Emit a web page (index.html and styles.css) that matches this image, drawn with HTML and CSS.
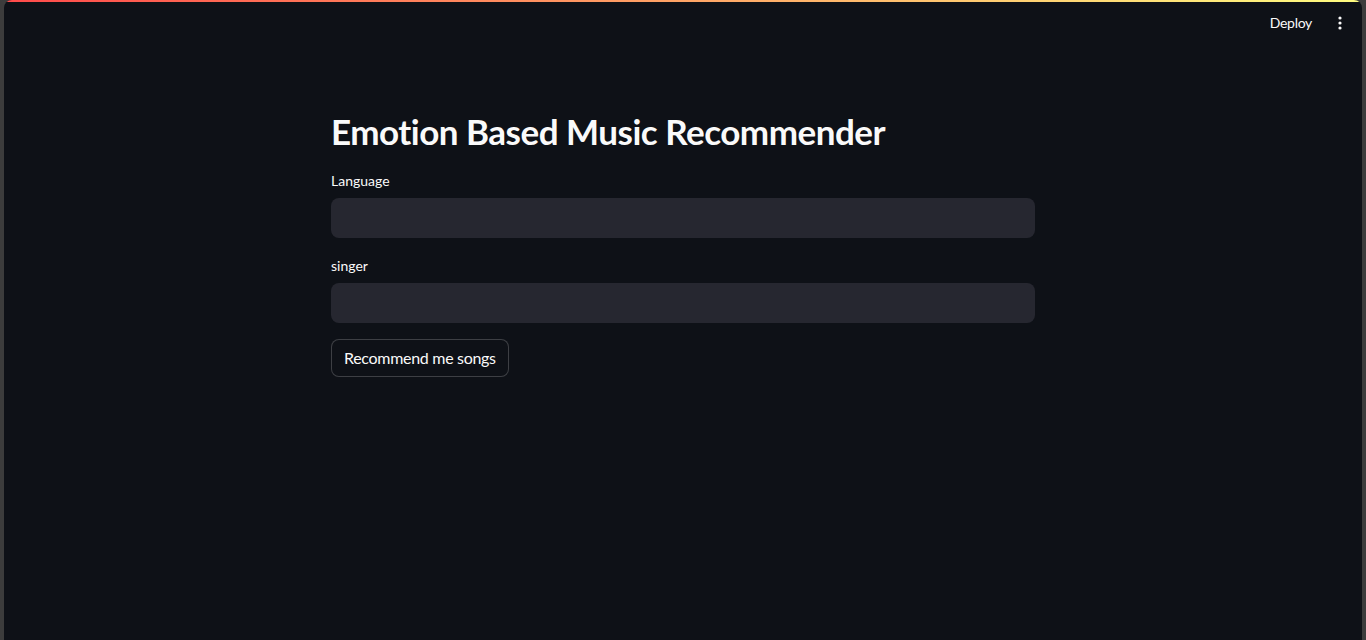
FILE: index.html
```html
<!DOCTYPE html>
<html lang="en">
<head>
<meta charset="utf-8">
<title>Emotion Based Music Recommender</title>
<link rel="stylesheet" href="styles.css">
</head>
<body>
<div class="frame">
  <div class="app">
    <div class="decoration"></div>
    <header class="header">
      <span class="deploy">Deploy</span>
      <span class="menu" aria-label="Main menu">
        <svg width="4" height="14" viewBox="0 0 4 14"><circle cx="2" cy="2" r="1.6" fill="#fafafa"/><circle cx="2" cy="7" r="1.6" fill="#fafafa"/><circle cx="2" cy="12" r="1.6" fill="#fafafa"/></svg>
      </span>
    </header>
    <main class="main">
      <div class="block">
        <h1 class="title">Emotion Based Music Recommender</h1>
        <div class="field">
          <label class="label">Language</label>
          <div class="input"></div>
        </div>
        <div class="field">
          <label class="label">singer</label>
          <div class="input"></div>
        </div>
        <div class="actions">
          <button class="button">Recommend me songs</button>
        </div>
      </div>
    </main>
  </div>
</div>
</body>
</html>
```
FILE: styles.css
```css
html, body {
  margin: 0;
  padding: 0;
  height: 100%;
}
body {
  background: #3c3c3c;
  font-family: "Lato", "Liberation Sans", sans-serif;
  font-variant-ligatures: none;
  color: #fafafa;
}
.frame {
  height: 640px;
  padding: 0 4px;
  box-sizing: border-box;
}
.app {
  position: relative;
  height: 100%;
  background: #0e1117;
  border-radius: 8px 8px 0 0;
  overflow: hidden;
  display: flex;
  flex-direction: column;
}
.decoration {
  position: absolute;
  top: 0;
  left: 0;
  right: 0;
  height: 2px;
  background: linear-gradient(90deg, rgb(255, 75, 75), rgb(255, 253, 128));
}
.header {
  height: 46px;
  display: flex;
  align-items: center;
  justify-content: flex-end;
  padding-right: 20px;
  gap: 26px;
}
.deploy {
  font-size: 14px;
  line-height: 20px;
  letter-spacing: -0.3px;
}
.menu {
  display: flex;
  align-items: center;
  width: 4px;
  height: 14px;
}
.menu svg {
  display: block;
}
.main {
  display: flex;
  justify-content: center;
  padding-top: 63px;
}
.block {
  width: 704px;
  display: flex;
  flex-direction: column;
  gap: 16px;
}
.title {
  margin: 0;
  font-size: 35px;
  font-weight: 700;
  line-height: 44px;
  letter-spacing: -0.5px;
}
.field {
  display: flex;
  flex-direction: column;
}
.label {
  font-size: 14px;
  line-height: 22px;
  padding-top: 1px;
  height: 28px;
}
.input {
  height: 40px;
  background: #262730;
  border-radius: 8px;
}
.actions {
  display: flex;
}
.button {
  height: 38px;
  padding: 0 12px;
  background: #0e1117;
  color: #fafafa;
  border: 1px solid rgba(250, 250, 250, 0.2);
  border-radius: 8px;
  font-family: inherit;
  font-size: 16px;
  line-height: 24px;
  letter-spacing: -0.3px;
}
```
